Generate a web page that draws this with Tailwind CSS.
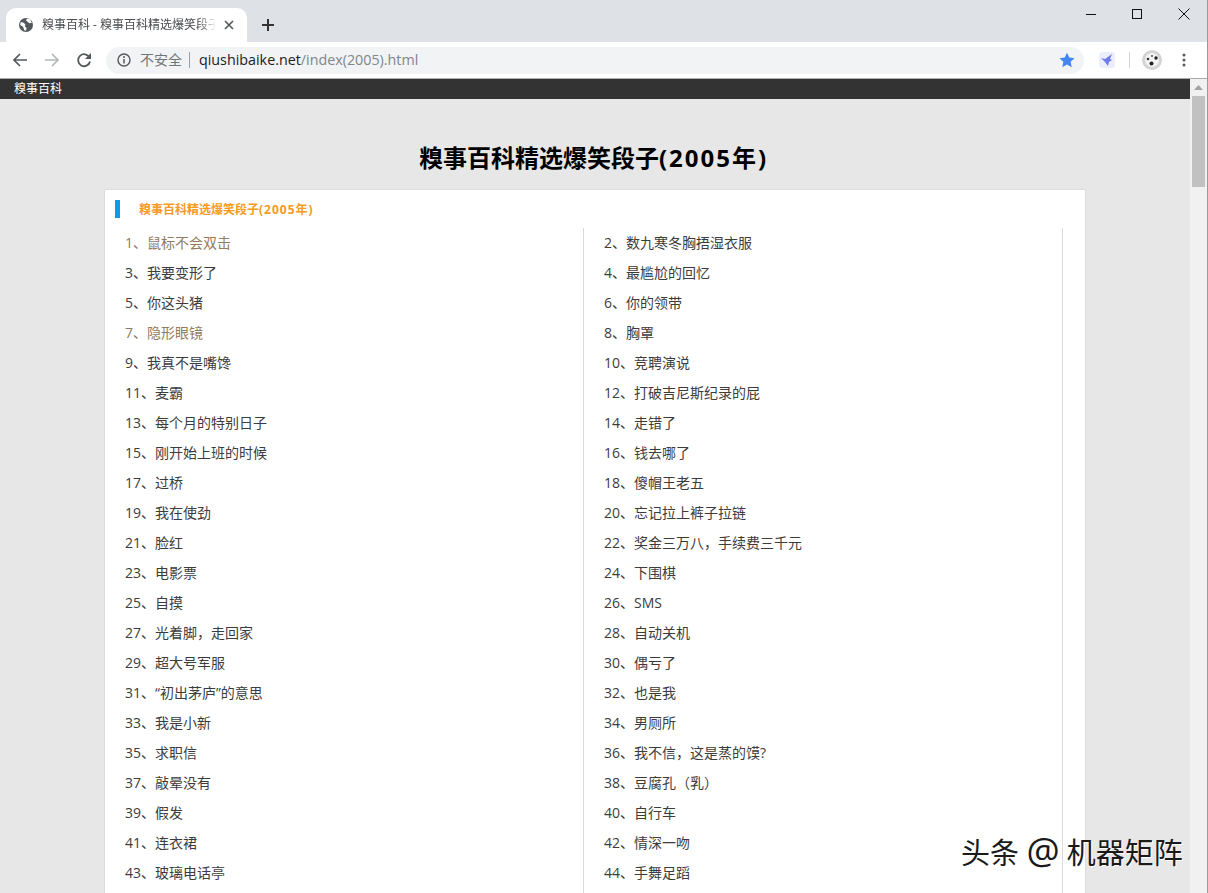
<!DOCTYPE html>
<html lang="zh-CN">
<head>
    <meta charset="UTF-8">
    <title>糗事百科 - 糗事百科精选爆笑段子(2005年)</title>
    <script src="https://cdn.jsdelivr.net/npm/@tailwindcss/browser@4"></script>
</head>
<body class="relative h-[893px] w-[1208px] overflow-hidden bg-white font-['Open_Sans','Noto_Sans_CJK_SC',sans-serif]">

    <!-- tab strip -->
    <div class="flex h-[42px] items-end bg-[#dee1e6] pl-[6px]">
        <div class="flex h-[34px] w-[241px] items-center rounded-t-[10px] bg-white pl-[13px] pr-[12px]">
            <svg class="h-[14px] w-[14px] shrink-0" viewBox="0 0 24 24"><circle cx="12" cy="12" r="12" fill="#55585c"/><path d="M3 7l5 1 3 3-1 3 3 3-1 5-3-1-2-6-5-3zM14 1l5 1 3 6-4 1-3-2-3-3z" fill="#fff"/></svg>
            <span class="ml-[9px] w-[174px] overflow-hidden whitespace-nowrap text-[12px] text-[#4a4c50] [mask-image:linear-gradient(90deg,#000_90%,transparent)]">糗事百科 - 糗事百科精选爆笑段子(2005年)</span>
            <svg class="ml-[8px] h-[10px] w-[10px] shrink-0" viewBox="0 0 10 10"><path d="M1 1l8 8M9 1l-8 8" stroke="#505357" stroke-width="1.6"/></svg>
        </div>
        <svg class="mb-[11px] ml-[15px] h-[12px] w-[12px]" viewBox="0 0 12 12"><path d="M6 0v12M0 6h12" stroke="#333" stroke-width="2"/></svg>
        <div class="ml-auto flex h-[42px] items-start">
            <svg class="mt-[9px] mr-[36px] h-[10px] w-[10px]" viewBox="0 0 10 10"><path d="M0 5.500h10" stroke="#111" stroke-width="1"/></svg>
            <svg class="mt-[9px] mr-[36px] h-[10px] w-[10px]" viewBox="0 0 10 10"><rect x=".5" y=".5" width="9" height="9" fill="none" stroke="#111"/></svg>
            <svg class="mt-[8px] mr-[18px] h-[12px] w-[12px]" viewBox="0 0 12 12"><path d="M.5.5l11 11M11.500.5l-11 11" stroke="#111"/></svg>
        </div>
    </div>

    <!-- toolbar -->
    <div class="flex h-[37px] items-center border-b border-[#a9abad] bg-white">
        <svg class="ml-[12px] h-[16px] w-[16px]" viewBox="0 0 16 16"><path d="M15 8H2M8 2 2 8l6 6" fill="none" stroke="#55585c" stroke-width="1.700"/></svg>
        <svg class="ml-[16px] h-[16px] w-[16px]" viewBox="0 0 16 16"><path d="M1 8h13M8 2l6 6-6 6" fill="none" stroke="#b4b6b9" stroke-width="1.700"/></svg>
        <svg class="ml-[16px] h-[16px] w-[16px]" viewBox="0 0 16 16"><path d="M13.500 5.500A6 6 0 1 0 14 9.500" fill="none" stroke="#55585c" stroke-width="1.800"/><path d="M15 1v6H9z" fill="#55585c"/></svg>
        <div class="ml-[14px] flex h-[27px] w-[978px] items-center rounded-full bg-[#f1f3f4] pl-[11px]">
            <svg class="h-[14px] w-[14px]" viewBox="0 0 14 14"><circle cx="7" cy="7" r="6" fill="none" stroke="#55585c" stroke-width="1.400"/><path d="M7 6v4.500" stroke="#55585c" stroke-width="1.500"/><circle cx="7" cy="4" r="1" fill="#55585c"/></svg>
            <span class="ml-[9px] text-[14px] leading-none text-[#70757a]">不安全</span>
            <span class="ml-[7px] h-[16px] w-px bg-[#9aa0a6]"></span>
            <span class="ml-[9px] text-[14.300px] leading-none whitespace-nowrap text-[#202124]">qiushibaike.net<span class="text-[#80868b]">/index(2005).html</span></span>
            <svg class="mr-[9px] ml-auto h-[16px] w-[16px]" viewBox="0 0 24 24"><path d="M12 1l3.400 7.400 8 .9-6 5.400 1.700 8L12 18.800 4.900 22.700l1.700-8-6-5.400 8-.9z" fill="#4285f4"/></svg>
        </div>
        <svg class="ml-[15px] h-[16px] w-[16px]" viewBox="0 0 16 16"><rect width="16" height="16" rx="3" fill="#eceefc"/><path d="M2 6l4 1 7-5-2 5 2 1-3 2-1 4-3-4z" fill="#6f7bea"/></svg>
        <span class="ml-[14px] h-[16px] w-px bg-[#d3d5d8]"></span>
        <svg class="ml-[12px] h-[20px] w-[20px]" viewBox="0 0 20 20"><circle cx="10" cy="10" r="10" fill="#d4d4d4"/><circle cx="10" cy="10" r="7" fill="#f4f4f4"/><circle cx="9.500" cy="13.500" r="2" fill="#222"/><circle cx="14" cy="8" r="1.700" fill="#222"/><circle cx="6" cy="9" r="1.300" fill="#333"/><circle cx="10" cy="6" r="1" fill="#555"/></svg>
        <svg class="ml-[20px] h-[14px] w-[4px]" viewBox="0 0 4 14"><circle cx="2" cy="2" r="1.500" fill="#55585c"/><circle cx="2" cy="7" r="1.500" fill="#55585c"/><circle cx="2" cy="12" r="1.500" fill="#55585c"/></svg>
    </div>

    <!-- page + scrollbar -->
    <div class="flex h-[814px] overflow-hidden pr-px">
        <div class="w-[1190px] bg-[#e7e7e7]">
            <div class="h-[20px] bg-[#333] pl-[14px] text-[12px] leading-[20px] text-white">糗事百科</div>
            <h1 class="mt-[41px] pr-[3px] text-center text-[24px] leading-[36px] font-bold text-black">糗事百科精选爆笑段子<span class="tracking-[2px]">(2005年)</span></h1>
            <div class="mt-[13px] ml-[104px] h-[800px] w-[982px] rounded-t-[2px] border border-[#dcdcdc] bg-white">
                <div class="flex h-[38px] items-center pl-[10px]">
                    <span class="mb-px h-[18px] w-[5px] bg-[#0f9bea]"></span>
                    <h2 class="mt-[2px] ml-[19px] text-[12px] font-bold text-[#f59a23]">糗事百科精选爆笑段子<span class="tracking-[1px]">(2005年)</span></h2>
                </div>
                <ul class="grid w-[958px] grid-cols-2 text-[14px] leading-[30px] text-[#3c3c3c]">
                    <li class="border-r border-[#d9d9d9] pl-[20px] text-[#937a60]">1、鼠标不会双击</li>
                    <li class="border-r border-[#d9d9d9] pl-[20px]">2、数九寒冬胸捂湿衣服</li>
                    <li class="border-r border-[#d9d9d9] pl-[20px]">3、我要变形了</li>
                    <li class="border-r border-[#d9d9d9] pl-[20px]">4、最尴尬的回忆</li>
                    <li class="border-r border-[#d9d9d9] pl-[20px]">5、你这头猪</li>
                    <li class="border-r border-[#d9d9d9] pl-[20px]">6、你的领带</li>
                    <li class="border-r border-[#d9d9d9] pl-[20px] text-[#937a60]">7、隐形眼镜</li>
                    <li class="border-r border-[#d9d9d9] pl-[20px]">8、胸罩</li>
                    <li class="border-r border-[#d9d9d9] pl-[20px]">9、我真不是嘴馋</li>
                    <li class="border-r border-[#d9d9d9] pl-[20px]">10、竞聘演说</li>
                    <li class="border-r border-[#d9d9d9] pl-[20px]">11、麦霸</li>
                    <li class="border-r border-[#d9d9d9] pl-[20px]">12、打破吉尼斯纪录的屁</li>
                    <li class="border-r border-[#d9d9d9] pl-[20px]">13、每个月的特别日子</li>
                    <li class="border-r border-[#d9d9d9] pl-[20px]">14、走错了</li>
                    <li class="border-r border-[#d9d9d9] pl-[20px]">15、刚开始上班的时候</li>
                    <li class="border-r border-[#d9d9d9] pl-[20px]">16、钱去哪了</li>
                    <li class="border-r border-[#d9d9d9] pl-[20px]">17、过桥</li>
                    <li class="border-r border-[#d9d9d9] pl-[20px]">18、傻帽王老五</li>
                    <li class="border-r border-[#d9d9d9] pl-[20px]">19、我在使劲</li>
                    <li class="border-r border-[#d9d9d9] pl-[20px]">20、忘记拉上裤子拉链</li>
                    <li class="border-r border-[#d9d9d9] pl-[20px]">21、脸红</li>
                    <li class="border-r border-[#d9d9d9] pl-[20px]">22、奖金三万八，手续费三千元</li>
                    <li class="border-r border-[#d9d9d9] pl-[20px]">23、电影票</li>
                    <li class="border-r border-[#d9d9d9] pl-[20px]">24、下围棋</li>
                    <li class="border-r border-[#d9d9d9] pl-[20px]">25、自摸</li>
                    <li class="border-r border-[#d9d9d9] pl-[20px]">26、SMS</li>
                    <li class="border-r border-[#d9d9d9] pl-[20px]">27、光着脚，走回家</li>
                    <li class="border-r border-[#d9d9d9] pl-[20px]">28、自动关机</li>
                    <li class="border-r border-[#d9d9d9] pl-[20px]">29、超大号军服</li>
                    <li class="border-r border-[#d9d9d9] pl-[20px]">30、偶亏了</li>
                    <li class="border-r border-[#d9d9d9] pl-[20px]">31、“初出茅庐”的意思</li>
                    <li class="border-r border-[#d9d9d9] pl-[20px]">32、也是我</li>
                    <li class="border-r border-[#d9d9d9] pl-[20px]">33、我是小新</li>
                    <li class="border-r border-[#d9d9d9] pl-[20px]">34、男厕所</li>
                    <li class="border-r border-[#d9d9d9] pl-[20px]">35、求职信</li>
                    <li class="border-r border-[#d9d9d9] pl-[20px]">36、我不信，这是蒸的馍?</li>
                    <li class="border-r border-[#d9d9d9] pl-[20px]">37、敲晕没有</li>
                    <li class="border-r border-[#d9d9d9] pl-[20px]">38、豆腐孔（乳）</li>
                    <li class="border-r border-[#d9d9d9] pl-[20px]">39、假发</li>
                    <li class="border-r border-[#d9d9d9] pl-[20px]">40、自行车</li>
                    <li class="border-r border-[#d9d9d9] pl-[20px]">41、连衣裙</li>
                    <li class="border-r border-[#d9d9d9] pl-[20px]">42、情深一吻</li>
                    <li class="border-r border-[#d9d9d9] pl-[20px]">43、玻璃电话亭</li>
                    <li class="border-r border-[#d9d9d9] pl-[20px]">44、手舞足蹈</li>
                    <li class="h-[30px] border-r border-[#d9d9d9]"></li>
                    <li class="h-[30px] border-r border-[#d9d9d9]"></li>
                </ul>
            </div>
        </div>
        <div class="flex w-[17px] flex-col items-center bg-[#f1f1f1]">
            <svg class="mt-[6px] h-[5px] w-[9px]" viewBox="0 0 9 5"><path d="M4.500 0 9 5H0z" fill="#a3a3a3"/></svg>
            <div class="mt-[6px] h-[91px] w-[13px] bg-[#c1c1c1]"></div>
        </div>
    </div>
    <div class="absolute top-0 right-0 h-[893px] w-px bg-[#9a9a9a]"></div>

    <!-- watermark -->
    <div class="absolute top-[831px] left-[961px] text-[29px] leading-[40px] whitespace-nowrap text-[#1a1a1a] [text-shadow:1px_1px_0_#fff]">头条 <span class="mr-[7px] text-[37px] leading-none">@</span>机器矩阵</div>
</body>
</html>
